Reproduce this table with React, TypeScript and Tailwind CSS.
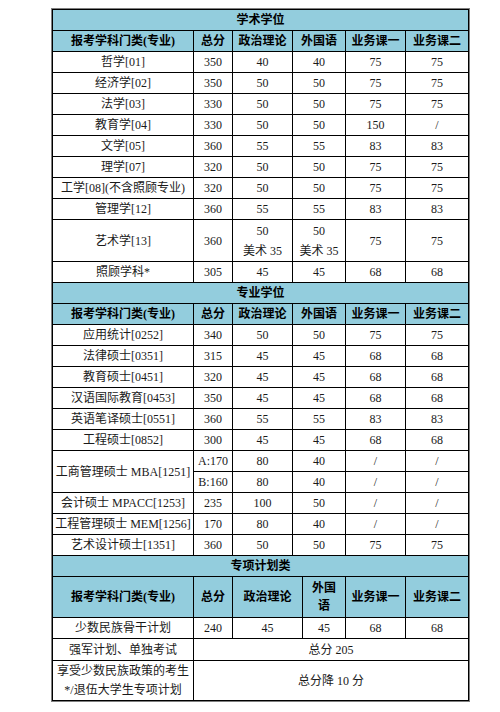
import type { ReactNode } from "react"

type Row = {
  name: ReactNode
  total: ReactNode
  politics: ReactNode
  foreign: ReactNode
  course1: ReactNode
  course2: ReactNode
  tall?: boolean
}

const academic: Row[] = [
  { name: "哲学[01]", total: "350", politics: "40", foreign: "40", course1: "75", course2: "75" },
  { name: "经济学[02]", total: "350", politics: "50", foreign: "50", course1: "75", course2: "75" },
  { name: "法学[03]", total: "330", politics: "50", foreign: "50", course1: "75", course2: "75" },
  { name: "教育学[04]", total: "330", politics: "50", foreign: "50", course1: "150", course2: "/" },
  { name: "文学[05]", total: "360", politics: "55", foreign: "55", course1: "83", course2: "83" },
  { name: "理学[07]", total: "320", politics: "50", foreign: "50", course1: "75", course2: "75" },
  { name: "工学[08](不含照顾专业)", total: "320", politics: "50", foreign: "50", course1: "75", course2: "75" },
  { name: "管理学[12]", total: "360", politics: "55", foreign: "55", course1: "83", course2: "83" },
  {
    name: "艺术学[13]",
    total: "360",
    politics: (
      <>
        50
        <br />
        美术 35
      </>
    ),
    foreign: (
      <>
        50
        <br />
        美术 35
      </>
    ),
    course1: "75",
    course2: "75",
    tall: true
  },
  { name: "照顾学科*", total: "305", politics: "45", foreign: "45", course1: "68", course2: "68" }
]

const professionalTop: Row[] = [
  { name: "应用统计[0252]", total: "340", politics: "50", foreign: "50", course1: "75", course2: "75" },
  { name: "法律硕士[0351]", total: "315", politics: "45", foreign: "45", course1: "68", course2: "68" },
  { name: "教育硕士[0451]", total: "320", politics: "45", foreign: "45", course1: "68", course2: "68" },
  { name: "汉语国际教育[0453]", total: "350", politics: "45", foreign: "45", course1: "68", course2: "68" },
  { name: "英语笔译硕士[0551]", total: "360", politics: "55", foreign: "55", course1: "83", course2: "83" },
  { name: "工程硕士[0852]", total: "300", politics: "45", foreign: "45", course1: "68", course2: "68" }
]

const professionalBottom: Row[] = [
  { name: "会计硕士 MPACC[1253]", total: "235", politics: "100", foreign: "50", course1: "/", course2: "/" },
  { name: "工程管理硕士 MEM[1256]", total: "170", politics: "80", foreign: "40", course1: "/", course2: "/" },
  { name: "艺术设计硕士[1351]", total: "360", politics: "50", foreign: "50", course1: "75", course2: "75" }
]

const cell = "border border-black p-0 text-center align-middle leading-[18px]"
const head = "border border-black bg-[#93cddd] p-0 text-center align-middle font-bold leading-[18px] text-black"

/** Blue band spanning the full table, e.g. 学术学位. */
function SectionTitle({ children }: { children: ReactNode }) {
  return (
    <tr className="h-[21px]">
      <td colSpan={7} className={head}>
        {children}
      </td>
    </tr>
  )
}

/** Column header row; `wide` switches to the layout of the last section. */
function HeaderRow({ wide }: { wide?: boolean }) {
  if (wide) {
    return (
      <tr className="h-[41px]">
        <td className={head}>报考学科门类(专业)</td>
        <td className={head}>总分</td>
        <td colSpan={2} className={head}>
          政治理论
        </td>
        <td className={head}>
          外国
          <br />
          语
        </td>
        <td className={head}>业务课一</td>
        <td className={head}>业务课二</td>
      </tr>
    )
  }
  return (
    <tr className="h-[21px]">
      <td className={head}>报考学科门类(专业)</td>
      <td className={head}>总分</td>
      <td className={head}>政治理论</td>
      <td colSpan={2} className={head}>
        外国语
      </td>
      <td className={head}>业务课一</td>
      <td className={head}>业务课二</td>
    </tr>
  )
}

function ScoreRow({ row }: { row: Row }) {
  const c = row.tall ? `${cell} leading-[20px]` : cell
  return (
    <tr className={row.tall ? "h-[42px]" : "h-[21px]"}>
      <td className={cell}>{row.name}</td>
      <td className={cell}>{row.total}</td>
      <td className={c}>{row.politics}</td>
      <td colSpan={2} className={c}>
        {row.foreign}
      </td>
      <td className={cell}>{row.course1}</td>
      <td className={cell}>{row.course2}</td>
    </tr>
  )
}

export default function App() {
  return (
    <div className="min-h-[712px] w-[500px] bg-white pl-[51px] pt-[8px]">
      <div
        className="inline-block border border-[#7f7f7f] text-[12px] text-[#1a1a1a]"
        style={{ fontFamily: '"Liberation Serif", "Noto Sans CJK SC", serif' }}
      >
        <table className="w-[416px] table-fixed border-collapse">
          <colgroup>
            <col className="w-[141px]" />
            <col className="w-[39px]" />
            <col className="w-[60px]" />
            <col className="w-[10px]" />
            <col className="w-[43px]" />
            <col className="w-[60px]" />
            <col className="w-[63px]" />
          </colgroup>
          <tbody>
            <SectionTitle>学术学位</SectionTitle>
            <HeaderRow />
            {academic.map((r, i) => (
              <ScoreRow key={i} row={r} />
            ))}

            <SectionTitle>专业学位</SectionTitle>
            <HeaderRow />
            {professionalTop.map((r, i) => (
              <ScoreRow key={i} row={r} />
            ))}
            <tr className="h-[21px]">
              <td rowSpan={2} className={cell}>
                工商管理硕士 MBA[1251]
              </td>
              <td className={cell}>A:170</td>
              <td className={cell}>80</td>
              <td colSpan={2} className={cell}>
                40
              </td>
              <td className={cell}>/</td>
              <td className={cell}>/</td>
            </tr>
            <tr className="h-[21px]">
              <td className={cell}>B:160</td>
              <td className={cell}>80</td>
              <td colSpan={2} className={cell}>
                40
              </td>
              <td className={cell}>/</td>
              <td className={cell}>/</td>
            </tr>
            {professionalBottom.map((r, i) => (
              <ScoreRow key={i} row={r} />
            ))}

            <SectionTitle>专项计划类</SectionTitle>
            <HeaderRow wide />
            <tr className="h-[21px]">
              <td className={cell}>少数民族骨干计划</td>
              <td className={cell}>240</td>
              <td colSpan={2} className={cell}>
                45
              </td>
              <td className={cell}>45</td>
              <td className={cell}>68</td>
              <td className={cell}>68</td>
            </tr>
            <tr className="h-[22px]">
              <td className={cell}>强军计划、单独考试</td>
              <td colSpan={6} className={cell}>
                总分 205
              </td>
            </tr>
            <tr className="h-[40px]">
              <td className={`${cell} leading-[19px]`}>
                享受少数民族政策的考生
                <br />
                */退伍大学生专项计划
              </td>
              <td colSpan={6} className={cell}>
                总分降 10 分
              </td>
            </tr>
          </tbody>
        </table>
      </div>
    </div>
  )
}
